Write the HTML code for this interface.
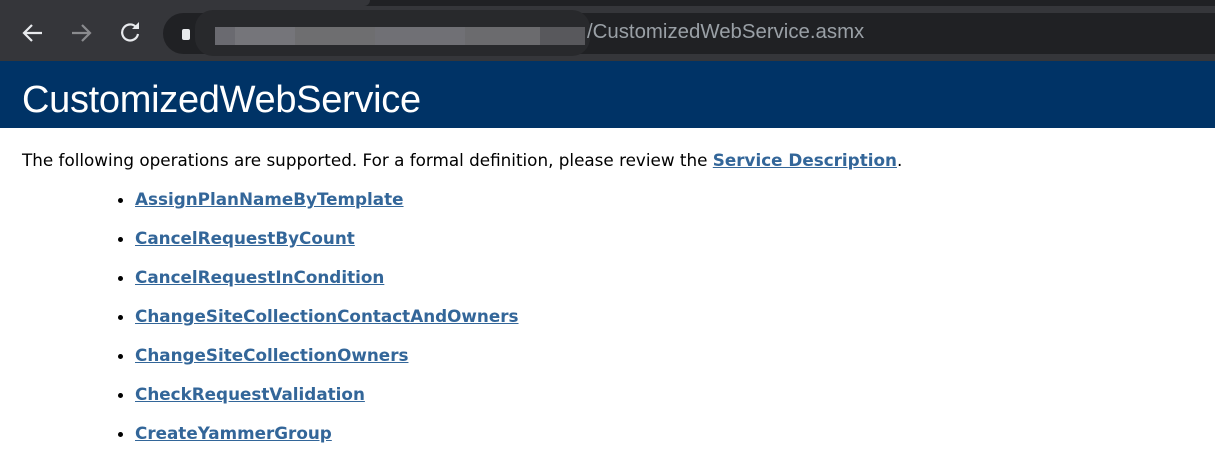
<!DOCTYPE html>
<html><head><style>
body{margin:0;width:1215px;height:454px;overflow:hidden;background:#fff;position:relative;font-family:"DejaVu Sans",Verdana,sans-serif}
.top{position:absolute;left:0;top:0;width:1215px;height:61px;background:#35363a}
.tabs{position:absolute;left:0;top:0;width:1215px;height:6px;background:#202124}
.tab{position:absolute;left:0;top:0;width:370px;height:6px;background:#35363a;border-radius:0 0 6px 0}
.addr{position:absolute;left:163px;top:13px;width:1100px;height:41px;background:#202124;border-radius:21px}
.blur{position:absolute;left:195px;top:10px;width:395px;height:46px;background:#28292c;border-radius:18px}
.px{position:absolute;top:27px;height:18px}
.url{position:absolute;left:587px;top:21px;font-family:"Liberation Sans",sans-serif;font-size:20.4px;color:#9aa0a6}
.hdr{position:absolute;left:0;top:61px;width:1215px;height:67px;background:#003366}
.hdr h1{margin:0;position:absolute;left:22px;top:18px;font-family:"Liberation Sans",sans-serif;font-weight:normal;font-size:38px;color:#fff;letter-spacing:-0.3px}
p{position:absolute;left:22px;top:150px;margin:0;font-size:16.8px;color:#000}
a{color:#336699;font-weight:bold;text-decoration:underline}
ul{position:absolute;left:0;top:188px;margin:0;padding:0 0 0 135px;font-size:16.8px}
li{height:39px;line-height:22px}
</style></head><body>
<div class="top"></div><div class="tabs"><div class="tab"></div></div>
<div class="addr"></div>
<svg style="position:absolute;left:0;top:18px" width="160" height="30">
<path d="M42 15H24M32 7l-8 8 8 8" stroke="#e8eaed" stroke-width="2.2" fill="none"/>
<path d="M72 15h18M82 7l8 8-8 8" stroke="#8a8b8e" stroke-width="2.2" fill="none"/>
<path d="M136 9a8 8 0 1 0 2 7" stroke="#e8eaed" stroke-width="2.2" fill="none"/><path d="M139 4v7h-7z" fill="#e8eaed"/>
</svg>
<div style="position:absolute;left:182px;top:29px;width:8px;height:11px;background:#e8eaed;border-radius:2px"></div>
<div class="blur"></div>
<div class="px" style="left:215px;width:20px;background:#6a6a70"></div>
<div class="px" style="left:235px;width:60px;background:#75757a"></div>
<div class="px" style="left:295px;width:80px;background:#6e6e70"></div>
<div class="px" style="left:375px;width:90px;background:#707075"></div>
<div class="px" style="left:465px;width:75px;background:#6b6b6e"></div>
<div class="px" style="left:540px;width:45px;background:#58585c"></div>
<div class="url">/CustomizedWebService.asmx</div>
<div class="hdr"><h1>CustomizedWebService</h1></div>
<p>The following operations are supported. For a formal definition, please review the <a>Service Description</a>.</p>
<ul>
<li><a>AssignPlanNameByTemplate</a></li>
<li><a>CancelRequestByCount</a></li>
<li><a>CancelRequestInCondition</a></li>
<li><a>ChangeSiteCollectionContactAndOwners</a></li>
<li><a>ChangeSiteCollectionOwners</a></li>
<li><a>CheckRequestValidation</a></li>
<li><a>CreateYammerGroup</a></li>
</ul>
</body></html>
